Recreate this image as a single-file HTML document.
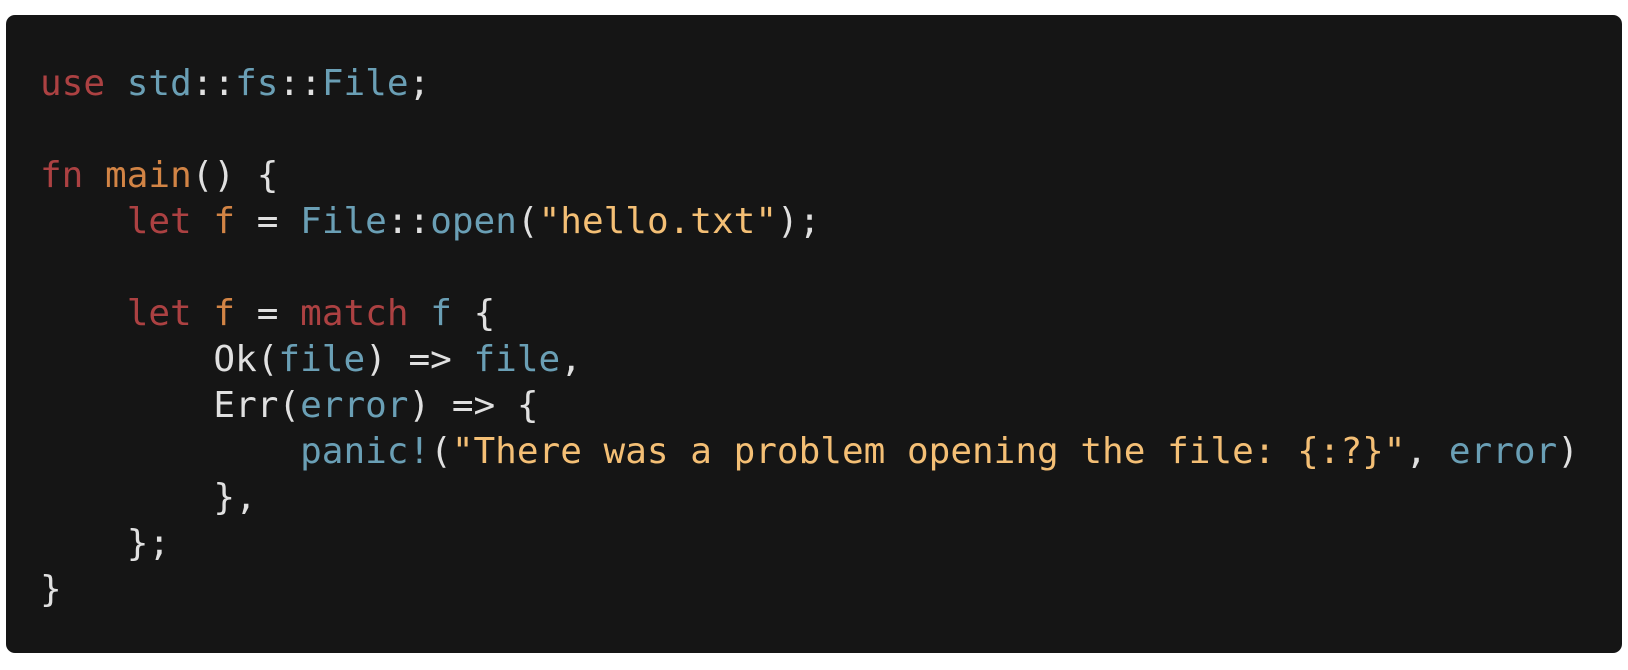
<!DOCTYPE html>
<html><head><meta charset="utf-8"><style>
html,body{margin:0;padding:0;background:#fff;width:1628px;height:670px;overflow:hidden}
.p{position:absolute;left:6px;top:15px;width:1616px;height:638px;background:#151515;border-radius:9px}
pre{position:absolute;left:40px;top:60.5px;margin:0;font-family:"DejaVu Sans Mono","Liberation Mono",monospace;font-size:36px;line-height:46px;color:#e0e0e0}
.r{color:#ac4142}.b{color:#6a9fb5}.o{color:#d28445}.y{color:#f4bf75}
</style></head><body><div class="p"></div>
<pre><span class="r">use</span> <span class="b">std</span>::<span class="b">fs</span>::<span class="b">File</span>;

<span class="r">fn</span> <span class="o">main</span>() {
    <span class="r">let</span> <span class="o">f</span> = <span class="b">File</span>::<span class="b">open</span>(<span class="y">"hello.txt"</span>);

    <span class="r">let</span> <span class="o">f</span> = <span class="r">match</span> <span class="b">f</span> {
        Ok(<span class="b">file</span>) =&gt; <span class="b">file</span>,
        Err(<span class="b">error</span>) =&gt; {
            <span class="b">panic!</span>(<span class="y">"There was a problem opening the file: {:?}"</span>, <span class="b">error</span>)
        },
    };
}</pre>
</body></html>
